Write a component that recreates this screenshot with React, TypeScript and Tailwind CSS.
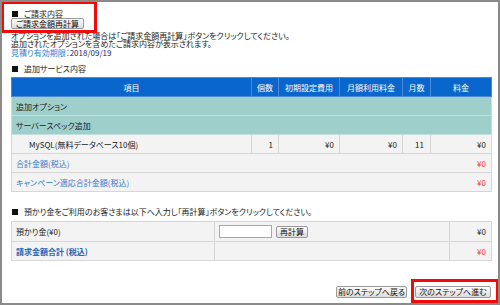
const jp = "font-['Noto_Sans_CJK_JP','Noto_Sans',sans-serif] [font-feature-settings:'palt']";

function Btn({ label, className = '' }: { label: string; className?: string }) {
  return (
    <button
      className={`block border border-[#9a9a9a] bg-gradient-to-b from-[#fdfdfd] to-[#dcdcdc] text-[8px] leading-none text-[#111] rounded-[2px] ${className}`}
    >
      {label}
    </button>
  );
}

function Heading({ text, className = '' }: { text: string; className?: string }) {
  return (
    <div className={`h-[9px] flex items-center text-[8px] leading-[9px] ${className}`}>
      <span className="inline-block w-[6px] h-[6px] bg-[#111] ml-[1px] mr-[6px]" />
      {text}
    </div>
  );
}

export default function App() {
  const cell = 'border border-[#d6d6d6] bg-[#f3f3f3] text-[8px] leading-[9px] text-[#222]';
  const head = 'border border-[#4d88d4] bg-[#0866cc] text-[8px] leading-[9px] text-white font-normal text-center';

  return (
    <div className={`relative w-[500px] h-[305px] overflow-hidden border-2 border-[#8a8a8a] bg-white text-[#222] text-[8px] leading-[8.5px] ${jp}`}>
      <div className="pl-[9px] w-[489px]">
        <Heading text="ご請求内容" className="mt-[7px] text-[8.5px]" />
        <Btn label="ご請求金額再計算" className="w-[73px] h-[11px]" />

        <div className="mt-[2.5px] text-[8px] leading-[8.5px]">
          <p>オプションを追加された場合は「ご請求金額再計算」ボタンをクリックしてください。</p>
          <p>追加されたオプションを含めたご請求内容が表示されます。</p>
          <p>
            <span className="text-[#2a7de0]">見積り有効期限：</span>
            <span className="text-[#1d1d72]">2018/09/19</span>
          </p>
        </div>

        <Heading text="追加サービス内容" className="mt-[7px]" />

        <table className="mt-[4px] w-[480px] table-fixed border-collapse">
          <colgroup>
            <col className="w-[240px]" />
            <col className="w-[27px]" />
            <col className="w-[61px]" />
            <col className="w-[63px]" />
            <col className="w-[28px]" />
            <col className="w-[61px]" />
          </colgroup>
          <tbody>
            <tr className="h-[19px]">
              <th className={head}>項目</th>
              <th className={head}>個数</th>
              <th className={head}>初期設定費用</th>
              <th className={head}>月額利用料金</th>
              <th className={head}>月数</th>
              <th className={head}>料金</th>
            </tr>
            <tr className="h-[19px]">
              <td colSpan={6} className="border border-[#c4e0de] bg-[#9ecfcb] text-[8px] leading-[9px] pl-[4px] text-[#222]">
                追加オプション
              </td>
            </tr>
            <tr className="h-[19px]">
              <td colSpan={6} className="border border-[#c4e0de] bg-[#9ecfcb] text-[8px] leading-[9px] pl-[4px] text-[#222]">
                サーバースペック追加
              </td>
            </tr>
            <tr className="h-[19px]">
              <td className={`${cell} pl-[17px]`}>MySQL(無料データベース10個)</td>
              <td className={`${cell} text-right pr-[5px]`}>1</td>
              <td className={`${cell} text-right pr-[5px]`}>¥0</td>
              <td className={`${cell} text-right pr-[5px]`}>¥0</td>
              <td className={`${cell} text-right pr-[6px]`}>11</td>
              <td className={`${cell} text-right pr-[5px]`}>¥0</td>
            </tr>
            <tr className="h-[19px]">
              <td colSpan={5} className={`${cell} border-r-0 pl-[4px] text-[#3478cf]`}>合計金額(税込)</td>
              <td className={`${cell} border-l-0 text-right pr-[5px] text-[#ff3030]`}>¥0</td>
            </tr>
            <tr className="h-[19px]">
              <td colSpan={5} className={`${cell} border-r-0 pl-[4px] text-[#3478cf]`}>キャンペーン適応合計金額(税込)</td>
              <td className={`${cell} border-l-0 text-right pr-[5px] text-[#ff3030]`}>¥0</td>
            </tr>
          </tbody>
        </table>

        <Heading
          text="預かり金をご利用のお客さまは以下へ入力し「再計算」ボタンをクリックしてください。"
          className="mt-[15px]"
        />

        <table className="mt-[5px] w-[480px] table-fixed border-collapse">
          <colgroup>
            <col className="w-[203px]" />
            <col className="w-[235px]" />
            <col className="w-[42px]" />
          </colgroup>
          <tbody>
            <tr className="h-[20px]">
              <td className={`${cell} pl-[4px]`}>預かり金(¥0)</td>
              <td className={`${cell} pl-[4px]`}>
                <div className="flex items-center gap-[4px]">
                  <input className="block w-[53px] h-[13px] border border-[#a8a8a8] bg-white" />
                  <Btn label="再計算" className="w-[32px] h-[12px]" />
                </div>
              </td>
              <td className={`${cell} text-right pr-[5px] text-[#2a86e0]`}>¥0</td>
            </tr>
            <tr className="h-[19px]">
              <td className={`${cell} pl-[4px] font-bold text-[#2465bd]`}>請求金額合計 (税込)</td>
              <td className={cell}></td>
              <td className={`${cell} text-right pr-[5px] text-[#ff3030]`}>¥0</td>
            </tr>
          </tbody>
        </table>

        <div className="mt-[25px] flex justify-end gap-[8px]">
          <Btn label="前のステップへ戻る" className="w-[71px] h-[12px]" />
          <Btn label="次のステップへ進む" className="w-[76px] h-[12px]" />
        </div>
      </div>

      <div className="absolute left-[-1px] top-[-1px] w-[96px] h-[32px] border-[3px] border-[#f00a0a]" />
      <div className="absolute left-[409px] top-[277px] w-[88px] h-[24px] border-[3px] border-[#f00a0a]" />
    </div>
  );
}
